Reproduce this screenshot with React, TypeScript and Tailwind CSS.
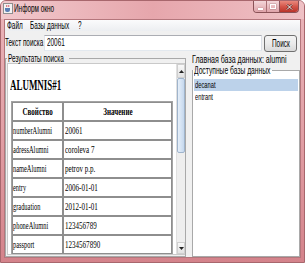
import React from "react";

type SP = { children: React.ReactNode; center?: boolean };
function S({ children, center }: SP) {
  return (
    <span
      className={
        center
          ? "inline-block whitespace-nowrap origin-center scale-x-[0.64]"
          : "inline-block whitespace-nowrap origin-left scale-x-[0.64]"
      }
    >
      {children}
    </span>
  );
}

const rows: [string, string][] = [
  ["numberAlumni", "20061"],
  ["adressAlumni", "coroleva 7"],
  ["nameAlumni", "petrov p.p."],
  ["entry", "2006-01-01"],
  ["graduation", "2012-01-01"],
  ["phoneAlumni", "123456789"],
  ["passport", "1234567890"],
];

export default function App() {
  return (
    <div className="w-[305px] h-[263px] overflow-hidden flex flex-col rounded-t-[6px] border border-[#a8676d] bg-gradient-to-b from-[#eab5ba] via-[#e2a0a6] to-[#d4838b] font-['Liberation_Sans',Arial,sans-serif] text-black">
      {/* title bar */}
      <div className="h-[18px] shrink-0 flex items-start bg-gradient-to-r from-[#f1c9cd] via-[#e6a6ac] to-[#efc1c5]">
        <svg className="ml-[2px] mt-[2px]" width="10" height="11" viewBox="0 0 10 11">
          <rect x="0.5" y="0.5" width="9" height="10" fill="#f3f3f3" stroke="#8f8f8f" />
          <path d="M3.5 2 q1 1 0 2 M5.5 2 q1 1 0 2" stroke="#cc3344" fill="none" strokeWidth="0.8" />
          <path d="M2 5 h5 v2 a2 2 0 0 1 -2 2 h-1 a2 2 0 0 1 -2 -2 z" fill="#5b7fb5" />
        </svg>
        <div className="ml-[1px] mt-[2px] text-[10px] leading-[12px]">
          <S>Информ окно</S>
        </div>
        <div className="ml-auto mr-[5px] flex h-[12px] border border-t-0 border-[#8a5257] rounded-b-[4px] overflow-hidden">
          <div className="w-[12px] flex items-end justify-center pb-[2px] bg-gradient-to-b from-[#f3d6d9] to-[#dfa3a9]">
            <div className="w-[5px] h-[2px] bg-white shadow-[0_0_1px_#5c3438]" />
          </div>
          <div className="w-[13px] border-l border-[#a86f74] flex items-center justify-center bg-gradient-to-b from-[#f3d6d9] to-[#dfa3a9]">
            <div className="w-[6px] h-[5px] border border-white shadow-[0_0_1px_#5c3438]" />
          </div>
          <div className="w-[19px] border-l border-[#8a5257] flex items-center justify-center bg-gradient-to-b from-[#e9887d] via-[#d4554a] to-[#b8342a]">
            <svg width="7" height="6" viewBox="0 0 7 6">
              <path d="M1 0.5 L6 5.5 M6 0.5 L1 5.5" stroke="#6a2620" strokeWidth="2" />
              <path d="M1 0.5 L6 5.5 M6 0.5 L1 5.5" stroke="#ffffff" strokeWidth="1" />
            </svg>
          </div>
        </div>
      </div>

      {/* client area */}
      <div className="mx-[3px] mb-[4px] flex-1 min-h-0 flex flex-col border border-[#b4767c] bg-[#f0f0f0]">
        {/* menu */}
        <div className="h-[11px] shrink-0 flex items-center pl-[2px] text-[10px] leading-[11px] bg-gradient-to-b from-[#fbfbfc] to-[#eceef1]">
          <div className="w-[23px] shrink-0">
            <S>Файл</S>
          </div>
          <div className="w-[48px] shrink-0">
            <S>Базы данных</S>
          </div>
          <div className="shrink-0">
            <S>?</S>
          </div>
        </div>

        {/* search row */}
        <div className="h-[23px] shrink-0 flex items-start pt-[4px] text-[10px] leading-[12px]">
          <div className="w-[39px] shrink-0 h-[16px] flex items-center">
            <S>Текст поиска</S>
          </div>
          <div className="w-[218px] shrink-0 h-[16px] flex items-center pl-[2px] bg-white border border-[#abadb3] border-b-[#e3e9ef] border-r-[#dbdfe6] border-l-[#e2e3ea]">
            <S>20061</S>
          </div>
          <div className="ml-[2px] w-[33px] h-[17px] shrink-0 rounded-[3px] border border-[#707070] bg-gradient-to-b from-[#f4f4f4] via-[#ebebeb] to-[#d9d9d9] flex items-center justify-center">
            <S center>Поиск</S>
          </div>
        </div>

        {/* split */}
        <div className="flex-1 min-h-0 flex">
          <fieldset className="w-[181px] h-[203px] min-w-0 shrink-0 border border-[#a9a9a9] pl-[1px]">
            <legend className="w-[62px] px-[1px] h-[9px] leading-[9px] text-[10px]">
              <S>Результаты поиска</S>
            </legend>
            <div className="h-[192px] flex border border-[#c9c9c9] border-r-0">
              <div className="w-[168px] h-full overflow-hidden bg-white pt-[14px] pl-[2px] font-['Liberation_Serif','Times_New_Roman',serif]">
                <div className="text-[14px] leading-[16px] font-bold">
                  <S>ALUMNIS#1</S>
                </div>
                <div className="mt-[7px] ml-[1px] w-[162px] border border-[#a3a3a3]">
                  <div className="flex h-[19px] text-[11px] font-bold">
                    <div className="w-[51px] shrink-0 border border-[#8e8e8e] flex items-center justify-center">
                      <S center>Свойство</S>
                    </div>
                    <div className="flex-1 border border-[#8e8e8e] flex items-center justify-center">
                      <S center>Значение</S>
                    </div>
                  </div>
                  {rows.map(([k, v]) => (
                    <div key={k} className="flex h-[19px]">
                      <div className="w-[51px] shrink-0 border border-[#8e8e8e] flex items-center text-[10px]">
                        <S>{k}</S>
                      </div>
                      <div className="flex-1 border border-[#8e8e8e] flex items-center pl-[1px] text-[11px]">
                        <S>{v}</S>
                      </div>
                    </div>
                  ))}
                </div>
              </div>
              {/* scrollbar */}
              <div className="w-[9px] h-full flex flex-col bg-[#eeeeee] border-l border-[#e0e0e0]">
                <div className="h-[14px] shrink-0 flex items-center justify-center border border-[#cfcfcf] bg-gradient-to-b from-[#f8f8f8] to-[#e2e2e2]">
                  <svg width="5" height="3" viewBox="0 0 5 3">
                    <path d="M0 3 L2.5 0 L5 3 Z" fill="#222" />
                  </svg>
                </div>
                <div className="h-[75px] shrink-0 rounded-[2px] border border-[#9fb4cc] bg-gradient-to-r from-[#e6eff9] to-[#c5d8ee]" />
                <div className="flex-1" />
                <div className="h-[12px] shrink-0 flex items-center justify-center border border-[#cfcfcf] bg-gradient-to-b from-[#f8f8f8] to-[#e2e2e2]">
                  <svg width="5" height="3" viewBox="0 0 5 3">
                    <path d="M0 0 L2.5 3 L5 0 Z" fill="#222" />
                  </svg>
                </div>
              </div>
            </div>
          </fieldset>

          <div className="w-[6px] shrink-0" />

          <div className="w-[108px] shrink-0 flex flex-col">
            <div className="h-[11px] shrink-0 flex items-center text-[11px] leading-[11px]">
              <S>Главная база данных: alumni</S>
            </div>
            <fieldset className="h-[192px] min-w-0 border border-[#a9a9a9] bg-white">
              <legend className="w-[79px] px-[1px] h-[10px] leading-[10px] text-[10.5px]">
                <S>Доступные базы данных</S>
              </legend>
              <div className="pt-[4px] px-[1px] text-[9px] leading-[12px]">
                <div className="h-[12px] bg-[#bcd2ea] flex items-center pl-[1px]">
                  <S>decanat</S>
                </div>
                <div className="h-[12px] flex items-center pl-[1px]">
                  <S>entrant</S>
                </div>
              </div>
            </fieldset>
          </div>
        </div>
      </div>
    </div>
  );
}
